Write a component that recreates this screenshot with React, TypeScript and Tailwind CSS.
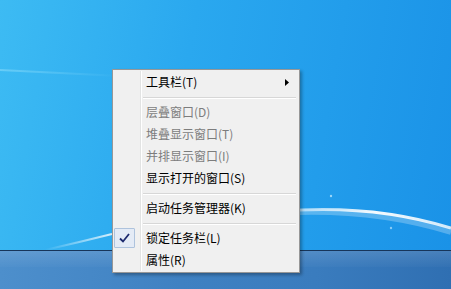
import React from "react";

const font = { fontFamily: '"Noto Sans CJK SC", "Noto Sans", sans-serif' };

function Row({
  label,
  disabled,
  checked,
  arrow,
}: {
  label: string;
  disabled?: boolean;
  checked?: boolean;
  arrow?: boolean;
}) {
  return (
    <div className="flex h-[22px] items-stretch">
      <div className="flex w-[27px] items-center">
        {checked && (
          <div className="ml-[1px] flex h-[20px] w-[21px] items-center justify-center rounded-[1px] border border-[#aec3dd] bg-[#e4ebf6]">
            <svg width="11" height="10" viewBox="0 0 11 10">
              <path d="M1 5.5 L4 8.5 L10 1" fill="none" stroke="#1d2a6e" strokeWidth="1.8" />
            </svg>
          </div>
        )}
      </div>
      <div className="w-[1px] bg-[#e2e3e3]" />
      <div className="w-[1px] bg-white" />
      <div
        className={`flex flex-1 items-center pl-[4px] text-[12px] leading-none ${
          disabled ? "text-[#7d7d7d]" : "text-black"
        }`}
      >
        <span className="-mt-[1px]">{label}</span>
      </div>
      {arrow && (
        <div className="mr-[10px] flex items-center">
          <svg width="4" height="7" viewBox="0 0 4 7">
            <path d="M0 0 L4 3.5 L0 7 Z" fill="#000" />
          </svg>
        </div>
      )}
    </div>
  );
}

function Sep() {
  return (
    <div className="flex h-[8px] items-stretch">
      <div className="w-[27px]" />
      <div className="w-[1px] bg-[#e2e3e3]" />
      <div className="w-[1px] bg-white" />
      <div className="ml-[1px] mr-[3px] flex flex-1 flex-col pt-[4px]">
        <div className="h-[1px] bg-[#d7d7d7]" />
        <div className="h-[1px] bg-white" />
      </div>
    </div>
  );
}

export default function App() {
  return (
    <div className="relative h-[289px] w-[451px] overflow-hidden" style={font}>
      <div className="flex h-full flex-col">
        <div className="relative h-[250px] bg-[linear-gradient(100deg,#3dbbf3_0%,#2aa8ef_40%,#1a92e7_100%)]">
          <svg className="absolute inset-0" width="451" height="250" viewBox="0 0 451 250">
            <defs>
              <linearGradient id="w1" x1="0" y1="0" x2="1" y2="0">
                <stop offset="0" stopColor="#ffffff" stopOpacity="0.5" />
                <stop offset="0.5" stopColor="#ffffff" stopOpacity="0.95" />
                <stop offset="1" stopColor="#ffffff" stopOpacity="0.8" />
              </linearGradient>
              <linearGradient id="w2" x1="0" y1="0" x2="1" y2="0">
                <stop offset="0" stopColor="#ffffff" stopOpacity="0" />
                <stop offset="1" stopColor="#ffffff" stopOpacity="0.8" />
              </linearGradient>
              <linearGradient id="w3" x1="0" y1="0" x2="1" y2="0">
                <stop offset="0" stopColor="#b8f0ff" stopOpacity="0.35" />
                <stop offset="1" stopColor="#b8f0ff" stopOpacity="0" />
              </linearGradient>
            </defs>
            <path d="M0 70 Q60 73 120 76" stroke="url(#w3)" strokeWidth="2" fill="none" />
            <path d="M298 210 Q380 206 451 228" stroke="url(#w1)" strokeWidth="3" fill="none" />
            <path d="M298 212 Q380 210 451 232" stroke="#ffffff" strokeOpacity="0.25" strokeWidth="6" fill="none" />
            <path d="M45 250 Q80 242 112 234" stroke="url(#w2)" strokeWidth="2" fill="none" />
            <circle cx="331" cy="196" r="1.2" fill="#cfefff" opacity="0.7" />
            <circle cx="391" cy="228" r="1.2" fill="#cfefff" opacity="0.6" />
          </svg>
        </div>
        <div className="h-[1px] bg-[#17355a]" />
        <div className="flex-1 bg-[linear-gradient(90deg,#4d8fcc_0%,#3f81c2_40%,#3a7cbe_70%,#2f6fb2_100%)]">
          <div className="h-[16px] bg-[linear-gradient(180deg,rgba(255,255,255,0.12),rgba(255,255,255,0.02))]" />
        </div>
      </div>

      <div className="absolute left-[112px] top-[69px] w-[188px] border border-[#979797] bg-[#f0f0f0] pt-[1px] pb-[1px] shadow-[2px_2px_3px_rgba(0,0,0,0.3)]">
        <Row label="工具栏(T)" arrow />
        <Sep />
        <Row label="层叠窗口(D)" disabled />
        <Row label="堆叠显示窗口(T)" disabled />
        <Row label="并排显示窗口(I)" disabled />
        <Row label="显示打开的窗口(S)" />
        <Sep />
        <Row label="启动任务管理器(K)" />
        <Sep />
        <Row label="锁定任务栏(L)" checked />
        <Row label="属性(R)" />
      </div>
    </div>
  );
}
